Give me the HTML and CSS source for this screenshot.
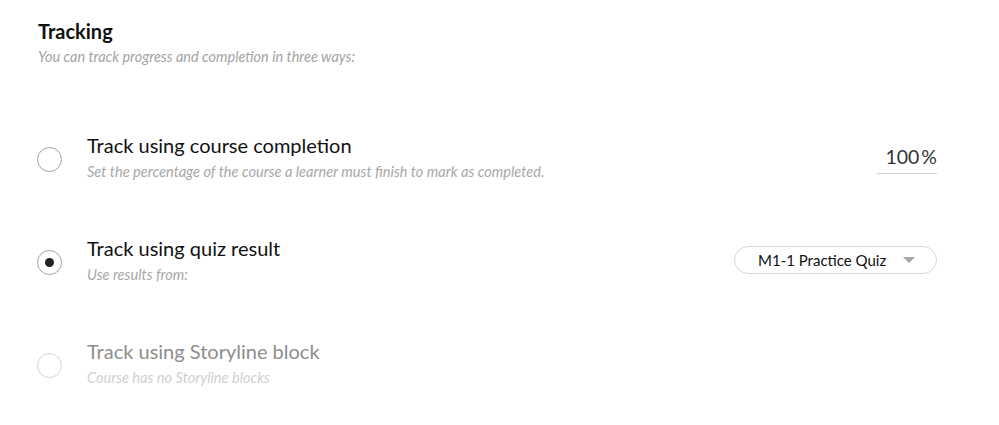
FILE: index.html
```html
<!DOCTYPE html>
<html>
<head>
<meta charset="utf-8">
<link rel="stylesheet" href="styles.css">
</head>
<body>
<section class="tracking">
  <h2 class="title">Tracking</h2>
  <p class="intro">You can track progress and completion in three ways:</p>
  <div class="options">
    <div class="option">
      <span class="radio"></span>
      <div class="text">
        <div class="label">Track using course completion</div>
        <div class="hint">Set the percentage of the course a learner must finish to mark as completed.</div>
      </div>
      <div class="percent"><span class="num">100</span><span class="pct">%</span></div>
    </div>
    <div class="option">
      <span class="radio checked"></span>
      <div class="text">
        <div class="label">Track using quiz result</div>
        <div class="hint">Use results from:</div>
      </div>
      <div class="select"><span>M1-1 Practice Quiz</span><span class="caret"></span></div>
    </div>
    <div class="option disabled">
      <span class="radio"></span>
      <div class="text">
        <div class="label">Track using Storyline block</div>
        <div class="hint">Course has no Storyline blocks</div>
      </div>
    </div>
  </div>
</section>
</body>
</html>
```
FILE: styles.css
```css
* { box-sizing: border-box; }
body {
  margin: 0;
  background: #fff;
  font-family: Lato, "Open Sans", sans-serif;
  color: #1a1a1a;
}
.tracking {
  padding: 18px 62px 0 38px;
}
.title {
  margin: 0;
  font-size: 20px;
  font-weight: 700;
  line-height: 26px;
  color: #111;
}
.intro {
  margin: 3px 0 0;
  font-size: 14.5px;
  font-style: italic;
  line-height: 20px;
  color: #a3a3a3;
}
.options {
  margin-top: 63px;
  display: flex;
  flex-direction: column;
  gap: 49px;
}
.option {
  display: flex;
  align-items: center;
  height: 54px;
}
.radio {
  width: 25px;
  height: 25px;
  border-radius: 50%;
  border: 1px solid #a3a3a3;
  flex: none;
  margin-left: -1px;
  margin-top: 4px;
  display: flex;
  align-items: center;
  justify-content: center;
}
.radio.checked::after {
  content: "";
  width: 9px;
  height: 9px;
  border-radius: 50%;
  background: #222;
}
.text {
  margin-left: 25px;
  flex: 1;
}
.label {
  font-size: 20px;
  line-height: 26px;
  color: #111;
}
.hint {
  margin-top: 4px;
  font-size: 14.6px;
  font-style: italic;
  line-height: 20px;
  color: #a8a8a8;
}
.percent {
  width: 60px;
  margin-top: 4px;
  border-bottom: 1px solid #d0d0d0;
  text-align: right;
  font-size: 19.5px;
  line-height: 26px;
  color: #333;
  padding-bottom: 3px;
}
.pct { margin-left: 2px; }
.select {
  width: 203px;
  height: 28px;
  margin-top: -1px;
  border: 1px solid #d6d6d6;
  border-radius: 14px;
  display: flex;
  align-items: center;
  padding-left: 23px;
  font-size: 15px;
  color: #111;
}
.caret {
  margin-left: 17px;
  width: 0;
  height: 0;
  border-left: 6px solid transparent;
  border-right: 6px solid transparent;
  border-top: 6px solid #a6a6a6;
}
.option.disabled .radio { border-color: #d4d4d4; }
.option.disabled .label { color: #8e8e8e; }
.option.disabled .hint { color: #d0d0d0; }
```
